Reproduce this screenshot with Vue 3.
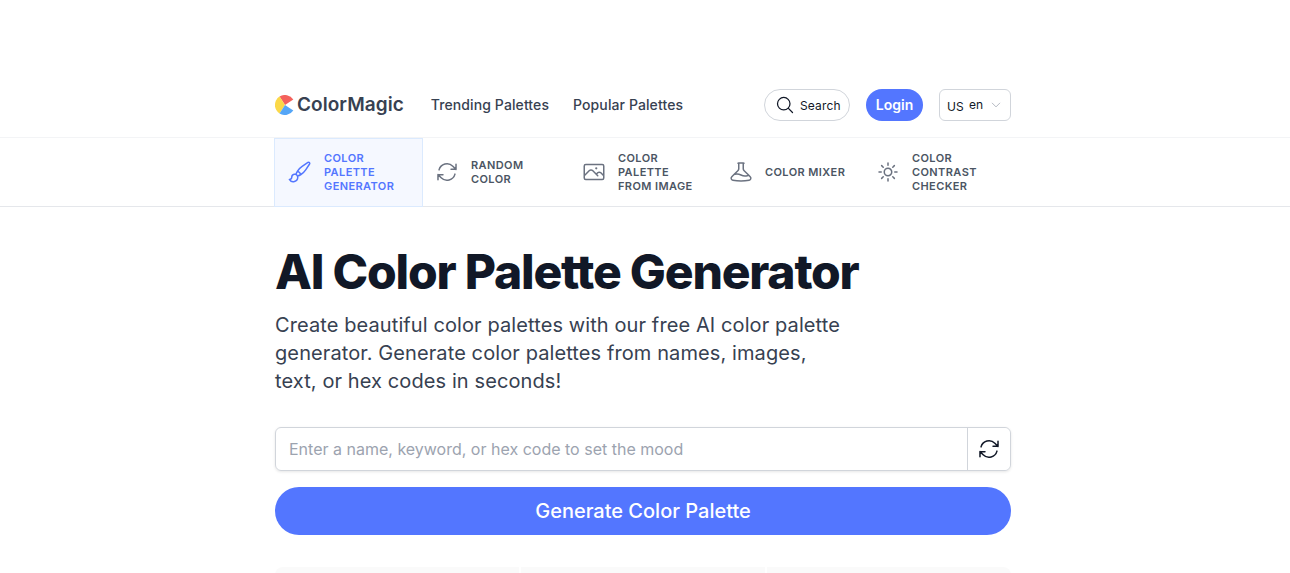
<template>
  <div class="page">
    <header class="topbar">
      <div class="wrap topbar-in">
        <a class="logo">
          <svg class="logo-mark" viewBox="0 0 20 20" width="20" height="20">
            <path d="M4.500 1.600A10 10 0 0 1 18.300 4.500L10 10Z" fill="#f4615c" />
            <path d="M4.500 1.600A10 10 0 0 0 4.500 18.400L10 10Z" fill="#fbd848" />
            <path d="M4.500 18.400A10 10 0 0 0 18.300 15.500L10 10Z" fill="#55a6f7" />
          </svg>
          <span class="logo-text">ColorMagic</span>
        </a>
        <nav class="links">
          <a>Trending Palettes</a>
          <a>Popular Palettes</a>
        </nav>
        <div class="actions">
          <button class="search">
            <svg viewBox="0 0 24 24" width="20" height="20" fill="none" stroke="#111827" stroke-width="1.5" stroke-linecap="round" stroke-linejoin="round">
              <path d="m21 21-5.197-5.197m0 0A7.5 7.5 0 1 0 5.196 5.196a7.500 7.500 0 0 0 10.607 10.607Z" />
            </svg>
            Search
          </button>
          <button class="login">Login</button>
          <div class="lang">
            <span class="flag">US</span>
            <span class="code">en</span>
            <svg viewBox="0 0 24 24" width="12" height="12" fill="none" stroke="#9ca3af" stroke-width="1.5" stroke-linecap="round" stroke-linejoin="round">
              <path d="m19.500 8.250-7.500 7.500-7.500-7.500" />
            </svg>
          </div>
        </div>
      </div>
    </header>

    <div class="tabs-bar">
      <div class="wrap tabs">
        <a v-for="tab in tabs" :key="tab.label" :class="['tab', { active: tab.active }]">
          <svg viewBox="0 0 24 24" width="24" height="24" fill="none" stroke="currentColor" stroke-width="1.5" stroke-linecap="round" stroke-linejoin="round">
            <path :d="tab.icon" />
          </svg>
          <span>{{ tab.label }}</span>
        </a>
      </div>
    </div>

    <div class="hero-row">
      <main class="wrap hero">
        <h1>AI Color Palette Generator</h1>
        <p class="sub">Create beautiful color palettes with our free AI color palette generator. Generate color palettes from names, images, text, or hex codes in seconds!</p>
        <div class="field">
          <input type="text" placeholder="Enter a name, keyword, or hex code to set the mood">
          <button class="shuffle">
            <svg viewBox="0 0 24 24" width="24" height="24" fill="none" stroke="#111827" stroke-width="1.5" stroke-linecap="round" stroke-linejoin="round">
              <path :d="refresh" />
            </svg>
          </button>
        </div>
        <button class="generate">Generate Color Palette</button>
        <div class="cards">
          <div class="card"></div>
          <div class="card"></div>
          <div class="card"></div>
        </div>
      </main>
    </div>
  </div>
</template>

<script setup>
const refresh = 'M16.023 9.348h4.992v-.001M2.985 19.644v-4.992m0 0h4.992m-4.993 0 3.181 3.183a8.250 8.250 0 0 0 13.803-3.700M4.031 9.865a8.250 8.250 0 0 1 13.803-3.700l3.181 3.182m0-4.991v4.990'

const tabs = [
  {
    label: 'COLOR PALETTE GENERATOR',
    active: true,
    icon: 'M9.530 16.122a3 3 0 0 0-5.780 1.128 2.250 2.250 0 0 1-2.400 2.245 4.500 4.500 0 0 0 8.400-2.245c0-.399-.078-.780-.220-1.128Zm0 0a15.998 15.998 0 0 0 3.388-1.620m-5.043-.025a15.994 15.994 0 0 1 1.622-3.395m3.420 3.420a15.995 15.995 0 0 0 4.764-4.648l3.876-5.814a1.151 1.151 0 0 0-1.597-1.597L14.146 6.320a15.996 15.996 0 0 0-4.649 4.763m3.420 3.420a6.776 6.776 0 0 0-3.420-3.420'
  },
  {
    label: 'RANDOM COLOR',
    icon: refresh
  },
  {
    label: 'COLOR PALETTE FROM IMAGE',
    icon: 'm2.250 15.750 5.159-5.159a2.250 2.250 0 0 1 3.182 0l5.159 5.159m-1.500-1.500 1.409-1.409a2.250 2.250 0 0 1 3.182 0l2.909 2.909m-18 3.750h16.500a1.500 1.500 0 0 0 1.500-1.500V6a1.500 1.500 0 0 0-1.500-1.500H3.750A1.500 1.500 0 0 0 2.250 6v12a1.500 1.500 0 0 0 1.500 1.500Zm10.500-11.250h.008v.008h-.008V8.250Zm.375 0a.375.375 0 1 1-.750 0 .375.375 0 0 1 .750 0Z'
  },
  {
    label: 'COLOR MIXER',
    icon: 'M9.750 3.104v5.714a2.250 2.250 0 0 1-.659 1.591L5 14.500M9.750 3.104c-.251.023-.501.050-.750.082m.750-.082a24.301 24.301 0 0 1 4.500 0m0 0v5.714c0 .597.237 1.170.659 1.591L19.800 15.300M14.250 3.104c.251.023.501.050.750.082M19.800 15.300l-1.570.393A9.065 9.065 0 0 1 12 15a9.065 9.065 0 0 0-6.230-.693L5 14.500m14.800.800 1.402 1.402c1.232 1.232.650 3.318-1.067 3.611A48.309 48.309 0 0 1 12 21c-2.773 0-5.491-.235-8.135-.687-1.718-.293-2.300-2.379-1.067-3.610L5 14.500'
  },
  {
    label: 'COLOR CONTRAST CHECKER',
    icon: 'M12 3v2.250m6.364.386-1.591 1.591M21 12h-2.250m-.386 6.364-1.591-1.591M12 18.750V21m-4.773-4.227-1.591 1.591M5.250 12H3m4.227-4.773L5.636 5.636M15.750 12a3.750 3.750 0 1 1-7.500 0 3.750 3.750 0 0 1 7.500 0Z'
  }
]
</script>

<style>
html,
body {
  margin: 0;
  background: #fff;
}
</style>

<style scoped>
.page {
  height: 573px;
  overflow: hidden;
  font-family: Inter, "Liberation Sans", sans-serif;
  color: #111827;
  padding-top: 73px;
  box-sizing: border-box;
}
/* the original has a thin scrollbar gutter, so content centres on 643 */
.topbar,
.tabs-bar,
.hero-row {
  padding-right: 4px;
}
.wrap {
  width: 736px;
  margin: 0 auto;
}
.topbar {
  border-bottom: 1px solid #f3f4f6;
}
.topbar-in {
  display: flex;
  align-items: center;
  height: 64px;
}
.logo {
  display: flex;
  align-items: center;
  gap: 2px;
}
.logo-text {
  font-size: 19px;
  font-weight: 600;
  color: #374151;
  letter-spacing: 0.05px;
  margin-top: -1px;
}
.links {
  display: flex;
  gap: 24px;
  margin-left: 27px;
  font-size: 14px;
  font-weight: 500;
  letter-spacing: 0.1px;
  color: #374151;
  margin-top: -1px;
}
.actions {
  display: flex;
  align-items: center;
  margin-left: auto;
}
button {
  font-family: inherit;
  cursor: pointer;
}
.search {
  display: flex;
  align-items: center;
  gap: 5px;
  height: 32px;
  width: 86px;
  padding: 0 0 0 10px;
  background: #fff;
  border: 1px solid #d1d5db;
  border-radius: 16px;
  font-size: 12px;
  font-weight: 400;
  letter-spacing: 0.15px;
  color: #111827;
  box-sizing: border-box;
}
.login {
  height: 32px;
  width: 57px;
  margin-left: 16px;
  padding: 0 0 1px;
  border: none;
  border-radius: 16px;
  background: #5376ff;
  color: #fff;
  font-size: 14px;
  font-weight: 600;
}
.lang {
  display: flex;
  align-items: center;
  width: 72px;
  height: 32px;
  margin-left: 16px;
  padding-left: 7px;
  box-sizing: border-box;
  border: 1px solid #d1d5db;
  border-radius: 6px;
  font-size: 12px;
  color: #111827;
}
.flag {
  width: 22px;
  font-size: 12px;
  padding-top: 3px;
}
.code {
  width: 21px;
  margin-top: -2px;
}
.tabs-bar {
  border-bottom: 1px solid #e5e7eb;
}
.tabs {
  display: flex;
  height: 68px;
}
.tab {
  display: flex;
  align-items: center;
  gap: 12px;
  box-sizing: border-box;
  width: 147px;
  padding-left: 12px;
  font-size: 11px;
  font-weight: 600;
  letter-spacing: 0.4px;
  line-height: 14px;
  color: #6b7280;
}
.tab span {
  color: #4b5563;
  max-width: 84px;
}
.tab.active {
  width: 149px;
  height: 69px;
  margin-left: -1px;
  padding: 0 0 1px 13px;
  background: #f5f8ff;
  border: 1px solid #dbeafe;
  color: #5376ff;
}
.tab.active span {
  color: #5376ff;
}
.tab svg {
  flex: none;
}
.hero h1 {
  margin: 36px 0 0;
  font-size: 48px;
  line-height: 58px;
  font-weight: 800;
  letter-spacing: -1.2px;
  color: #111827;
}
.sub {
  margin: 10px 0 0;
  width: 576px;
  font-size: 20px;
  line-height: 28px;
  letter-spacing: 0.1px;
  color: #374151;
}
.field {
  display: flex;
  box-sizing: border-box;
  margin-top: 32px;
  height: 44px;
  border: 1px solid #d1d5db;
  border-radius: 6px;
  box-shadow: 0 1px 3px rgba(0, 0, 0, 0.1);
}
.field input {
  flex: 1;
  min-width: 0;
  padding: 0 13px;
  border: none;
  outline: none;
  background: transparent;
  font-family: inherit;
  font-size: 16px;
}
.field input::placeholder {
  color: #9ca3af;
}
.shuffle {
  width: 43px;
  display: flex;
  align-items: center;
  justify-content: center;
  padding: 0;
  background: #fff;
  border: none;
  border-left: 1px solid #d1d5db;
  border-radius: 0 6px 6px 0;
}
.generate {
  display: block;
  width: 100%;
  height: 48px;
  margin-top: 16px;
  border: none;
  border-radius: 24px;
  background: #5376ff;
  color: #fff;
  font-size: 20px;
  font-weight: 500;
}
.cards {
  display: flex;
  gap: 2px;
  margin-top: 32px;
}
.card {
  flex: 1;
  height: 80px;
  background: #fafafa;
}
.card:first-child {
  border-top-left-radius: 8px;
}
.card:last-child {
  border-top-right-radius: 8px;
}
</style>
